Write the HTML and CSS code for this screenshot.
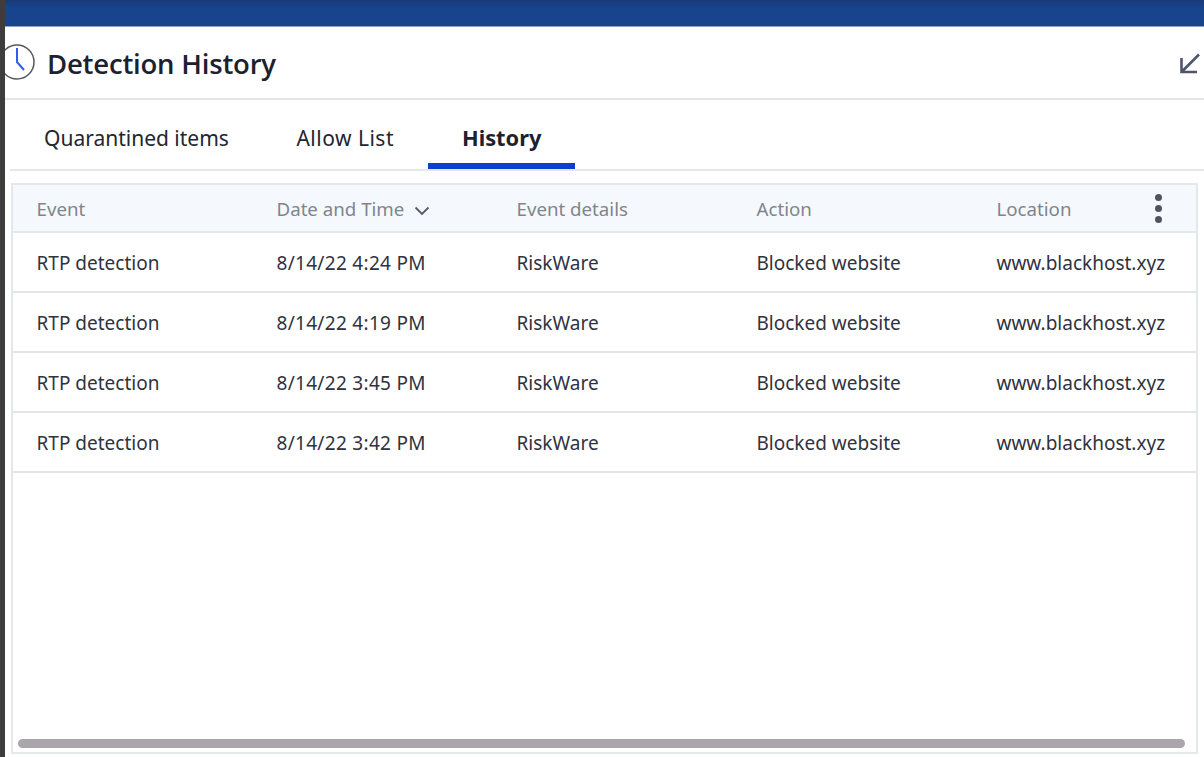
FILE: index.html
```html
<!DOCTYPE html>
<html lang="en">
<head>
    <meta charset="UTF-8">
    <meta name="viewport" content="width=device-width, initial-scale=1.0">
    <title>Detection History</title>
    <link rel="stylesheet" href="styles.css">
</head>
<body>

    <div class="topbar"></div>

    <div class="panel">
        <div class="header">
            <div class="title-group">
                <svg class="clock" width="36" height="36" viewBox="0 0 36 36">
                    <circle cx="18" cy="18" r="17" fill="none" stroke="#55585f" stroke-width="1.500"/>
                    <path d="M18 4V18L25 26" fill="none" stroke="#2f5fe8" stroke-width="2"/>
                </svg>
                <h1>Detection History</h1>
            </div>
            <svg class="collapse" width="22" height="22" viewBox="0 0 22 22">
                <path d="M20 1.500L3 18.500M2.500 5V19H18" fill="none" stroke="#50566a" stroke-width="2.600"/>
            </svg>
        </div>

        <div class="tabs">
            <div class="tab">Quarantined items</div>
            <div class="tab spaced">Allow List</div>
            <div class="tab active">History</div>
        </div>

        <div class="table-box">
            <table>
                <thead>
                    <tr>
                        <th>Event</th>
                        <th>
                            <span class="sort">Date and Time
                                <svg width="16" height="10" viewBox="0 0 16 10"><path d="M1.500 1.500L8 8L14.500 1.500" fill="none" stroke="#555a66" stroke-width="1.800"/></svg>
                            </span>
                        </th>
                        <th>Event details</th>
                        <th>Action</th>
                        <th class="last">
                            <span class="last-head">Location
                                <span class="dots"><i></i><i></i><i></i></span>
                            </span>
                        </th>
                    </tr>
                </thead>
                <tbody>
                    <tr>
                        <td>RTP detection</td>
                        <td class="date">8/14/22 4:24 PM</td>
                        <td>RiskWare</td>
                        <td>Blocked website</td>
                        <td>www.blackhost.xyz</td>
                    </tr>
                    <tr>
                        <td>RTP detection</td>
                        <td class="date">8/14/22 4:19 PM</td>
                        <td>RiskWare</td>
                        <td>Blocked website</td>
                        <td>www.blackhost.xyz</td>
                    </tr>
                    <tr>
                        <td>RTP detection</td>
                        <td class="date">8/14/22 3:45 PM</td>
                        <td>RiskWare</td>
                        <td>Blocked website</td>
                        <td>www.blackhost.xyz</td>
                    </tr>
                    <tr>
                        <td>RTP detection</td>
                        <td class="date">8/14/22 3:42 PM</td>
                        <td>RiskWare</td>
                        <td>Blocked website</td>
                        <td>www.blackhost.xyz</td>
                    </tr>
                </tbody>
            </table>
            <div class="scrollbar"></div>
        </div>
    </div>

</body>
</html>
```

FILE: styles.css
```css
html, body {
    height: 100%;
}

body {
    font-family: "Noto Sans", Arial, sans-serif;
    margin: 0;
    background-color: #fff;
    border-left: 5px solid #3d3d3d;
    display: flex;
    flex-direction: column;
    height: 757px;
    overflow: hidden;
    box-sizing: border-box;
}

.topbar {
    height: 26px;
    flex: none;
    background: linear-gradient(#1a3a78, #17448c 30%);
    border-bottom: 1px solid #8fa3c6;
}

.panel {
    flex: 1;
    display: flex;
    flex-direction: column;
    min-height: 0;
    overflow: hidden;
}

.header {
    height: 71px;
    flex: none;
    display: flex;
    justify-content: space-between;
    align-items: center;
    border-bottom: 2px solid #e3e4ea;
    padding-right: 3px;
}

.title-group {
    display: flex;
    align-items: center;
    gap: 12px;
}

.clock {
    margin-left: -6px;
    margin-top: -2px;
}

.collapse {
    margin-top: 2px;
}

h1 {
    font-family: "Open Sans", sans-serif;
    font-size: 27.500px;
    font-weight: 600;
    letter-spacing: -0.2px;
    color: #1c2130;
    margin: 2px 0 0 0;
}

.tabs {
    height: 71px;
    flex: none;
    margin-left: 5px;
    display: flex;
    border-bottom: 2px solid #e3e6ea;
    box-sizing: border-box;
}

.tab {
    padding: 0 34px;
    font-size: 21px;
    line-height: 76px;
    height: 69px;
    color: #22262f;
    box-sizing: border-box;
}

.tab.spaced {
    letter-spacing: 0.5px;
    padding-left: 33.500px;
}

.tab.active {
    font-size: 21.800px;
    line-height: 75px;
    font-weight: 700;
    color: #1c2130;
    border-bottom: 6px solid #0b3fd1;
}

.table-box {
    flex: none;
    height: 571px;
    margin: 12px 6px 0 6px;
    border: 2px solid #e3e8ea;
    position: relative;
    box-sizing: border-box;
}

table {
    width: 100%;
    border-collapse: collapse;
    table-layout: fixed;
}

th {
    height: 47px;
    padding: 0 0 0 23.500px;
    width: 240px;
    box-sizing: border-box;
    text-align: left;
    font-size: 18.700px;
    font-weight: 400;
    color: #80848d;
    background-color: #f5f9fd;
    border-bottom: 2px solid #e3e8ea;
}

th.last {
    width: auto;
}

td {
    height: 58px;
    padding: 2px 0 0 23.500px;
    box-sizing: content-box;
    font-size: 19px;
    color: #2f3340;
    border-bottom: 2px solid #e3e6e8;
    white-space: nowrap;
}

tbody td {
    height: 56px;
}

td.date {
    letter-spacing: 0.3px;
}

.sort svg {
    margin-left: 5px;
}

.last-head {
    display: flex;
    align-items: center;
    justify-content: space-between;
    padding-right: 34px;
}

.dots {
    display: flex;
    flex-direction: column;
    gap: 4px;
}

.dots i {
    width: 7px;
    height: 7px;
    border-radius: 50%;
    background-color: #50545f;
}

.scrollbar {
    position: absolute;
    left: 5px;
    right: 11px;
    bottom: 4px;
    height: 9px;
    border-radius: 5px;
    background-color: #a9a7aa;
}
```
